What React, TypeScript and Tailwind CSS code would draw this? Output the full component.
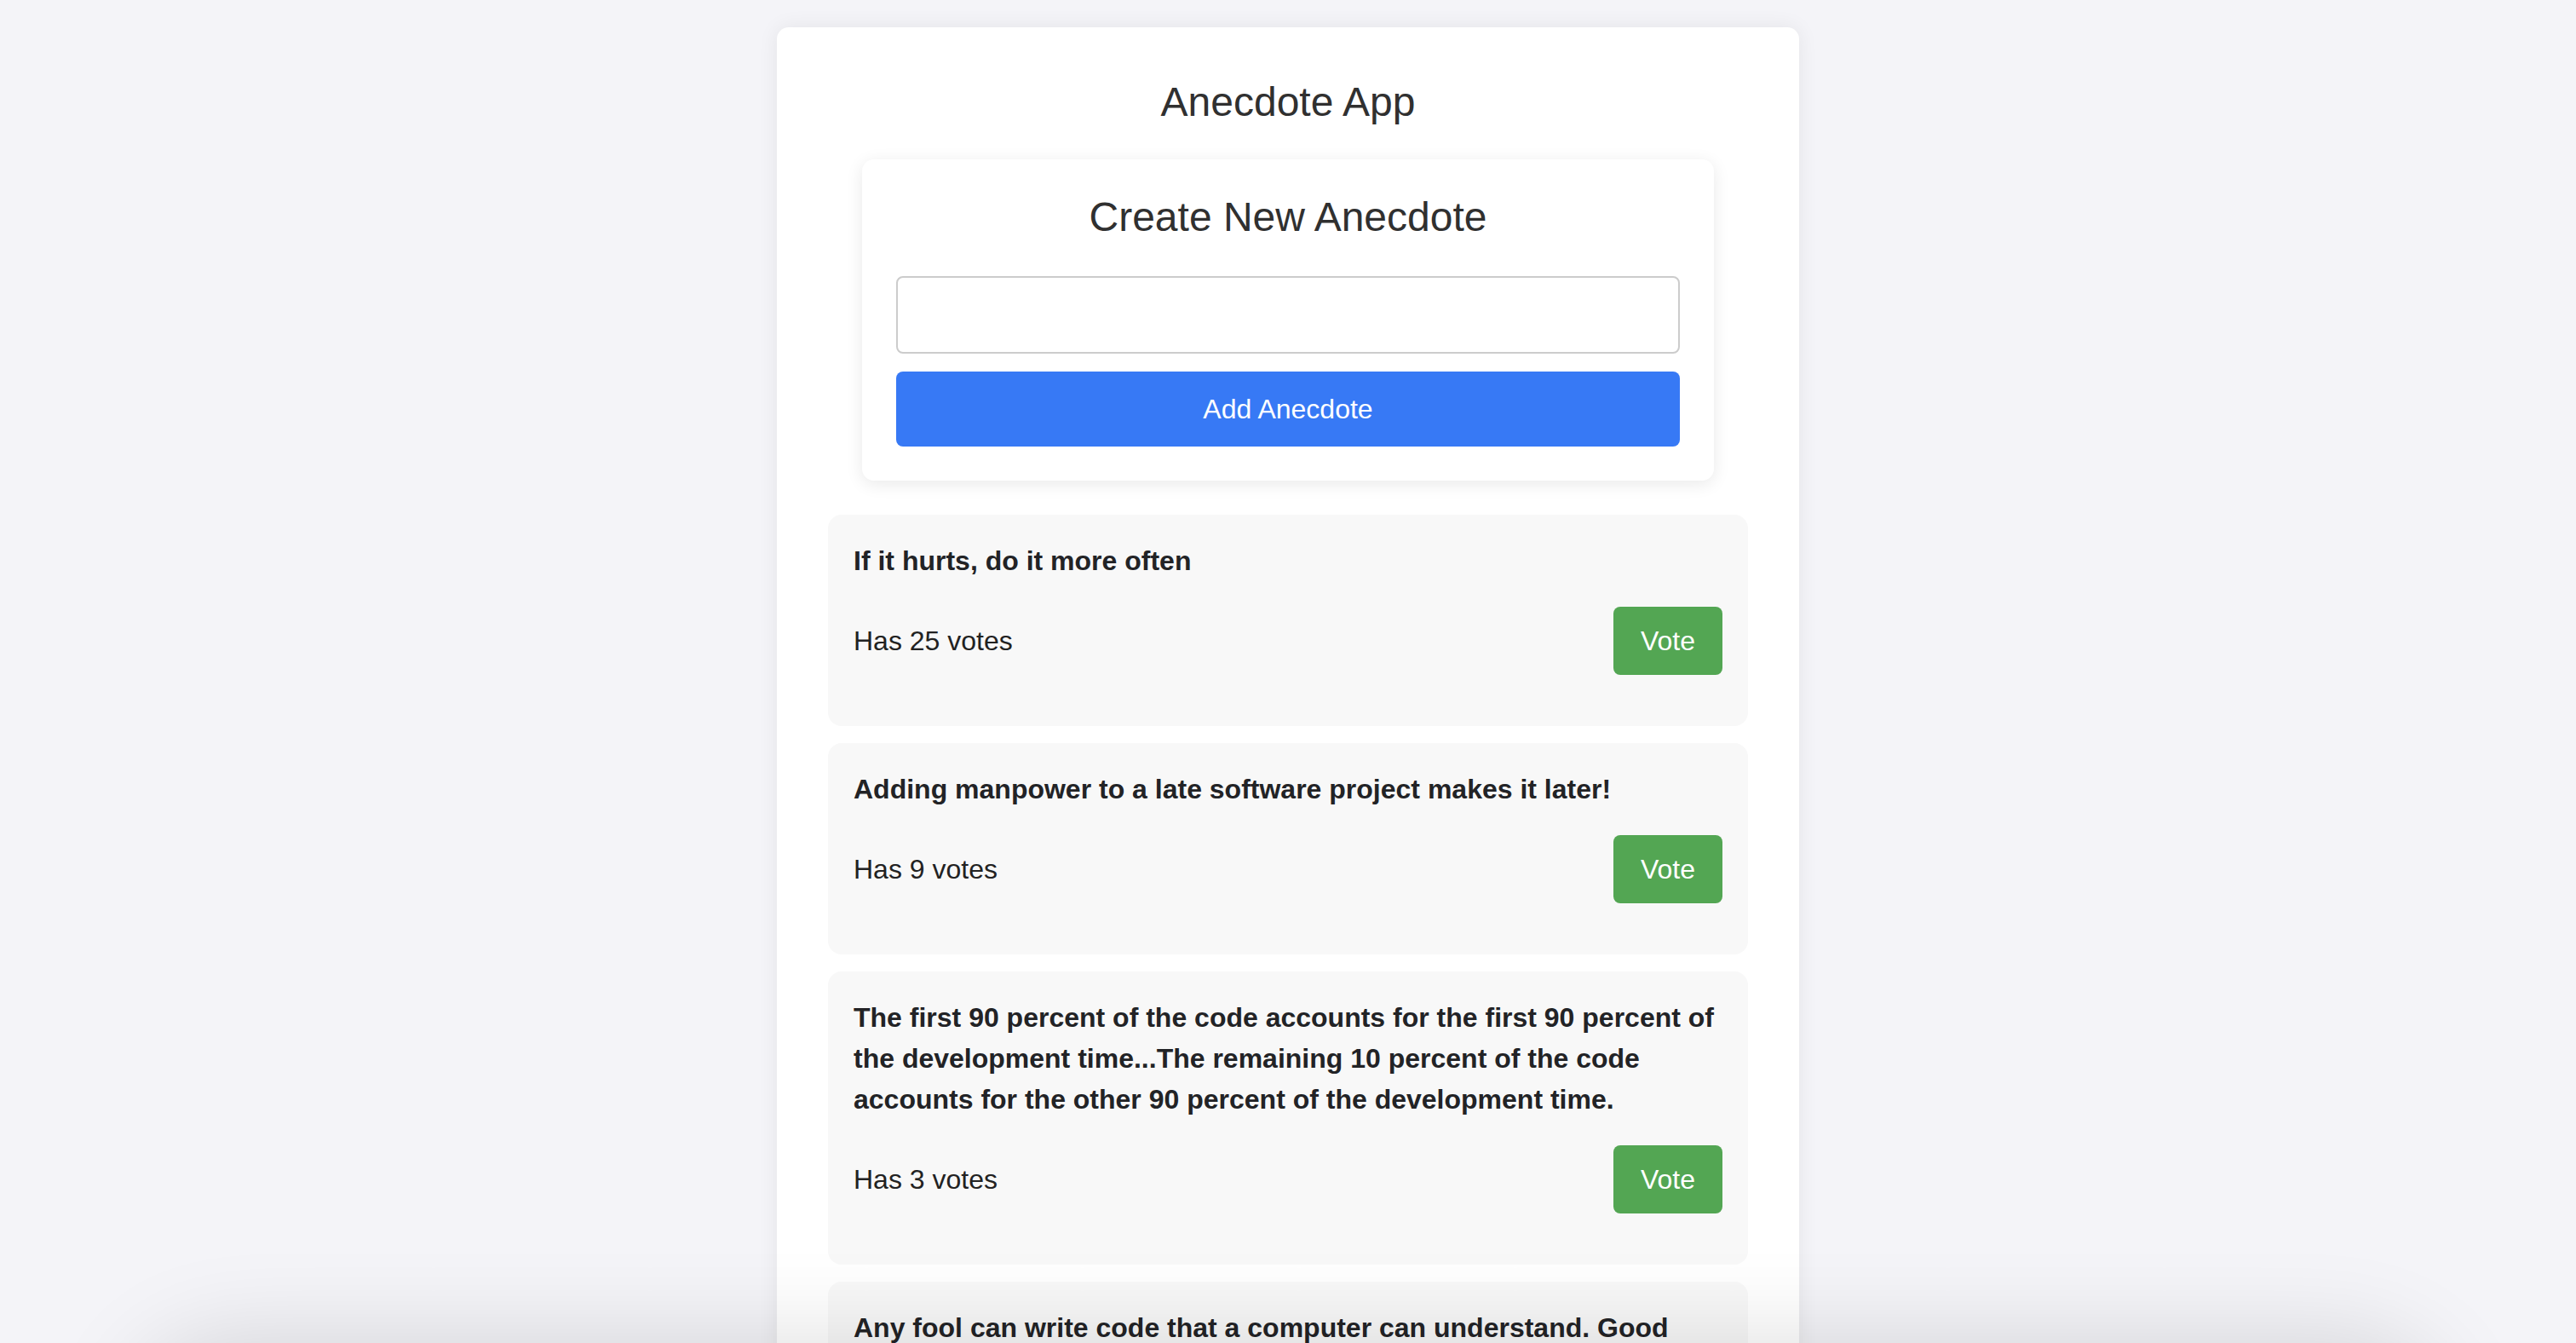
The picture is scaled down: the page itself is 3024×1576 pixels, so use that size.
import React from "react";

const anecdotes = [
  { text: "If it hurts, do it more often", votes: 25 },
  { text: "Adding manpower to a late software project makes it later!", votes: 9 },
  {
    text: "The first 90 percent of the code accounts for the first 90 percent of the development time...The remaining 10 percent of the code accounts for the other 90 percent of the development time.",
    votes: 3,
  },
  {
    text: "Any fool can write code that a computer can understand. Good programmers write code that humans can understand.",
    votes: 2,
  },
];

export default function App() {
  return (
    <div
      className="relative h-[1576px] w-full overflow-hidden bg-[#f4f4f8] pt-[32px]"
      style={{ fontFamily: '"Liberation Sans", Arial, Helvetica, sans-serif' }}
    >
      <div className="mx-auto w-[1200px] rounded-[14px] bg-white p-[60px] shadow-[0_0_24px_rgba(0,0,0,0.07)]">
        <h1 className="m-0 text-center text-[48px] leading-[55px] font-normal text-[#303030]">
          Anecdote App
        </h1>

        <div className="mx-auto mt-[40px] w-[1000px] rounded-[14px] bg-white p-[40px] shadow-[0_4px_20px_rgba(0,0,0,0.09)]">
          <h2 className="m-0 mb-[42px] text-center text-[48px] leading-[55px] font-normal text-[#303030]">
            Create New Anecdote
          </h2>
          <input
            type="text"
            className="block h-[91px] w-full rounded-[8px] border-2 border-[#cccccc] bg-white px-[20px] text-[32px] outline-none"
          />
          <button className="mt-[21px] flex h-[88px] w-full items-center justify-center rounded-[8px] bg-[#3779f5] text-[32px] leading-[37px] text-white">
            Add Anecdote
          </button>
        </div>

        <div className="mt-[40px] flex flex-col gap-[20px]">
          {anecdotes.map((a, i) => (
            <div key={i} className="rounded-[16px] bg-[#f8f8f8] px-[30px] pt-[30px] pb-[30px]">
              <div className="text-[32px] leading-[48px] font-bold text-[#222326]">{a.text}</div>
              <div className="my-[30px] flex h-[80px] items-center justify-between">
                <span className="text-[32px] leading-[37px] text-[#222222]">Has {a.votes} votes</span>
                <button className="flex h-[80px] w-[128px] items-center justify-center rounded-[8px] bg-[#53a653] text-[32px] leading-[37px] text-white">
                  Vote
                </button>
              </div>
            </div>
          ))}
        </div>
      </div>

      <div className="pointer-events-none absolute left-[190px] right-[190px] top-[1610px] h-[200px] rounded-[80px] shadow-[0_0_110px_40px_rgba(0,0,0,0.13)]" />
    </div>
  );
}
